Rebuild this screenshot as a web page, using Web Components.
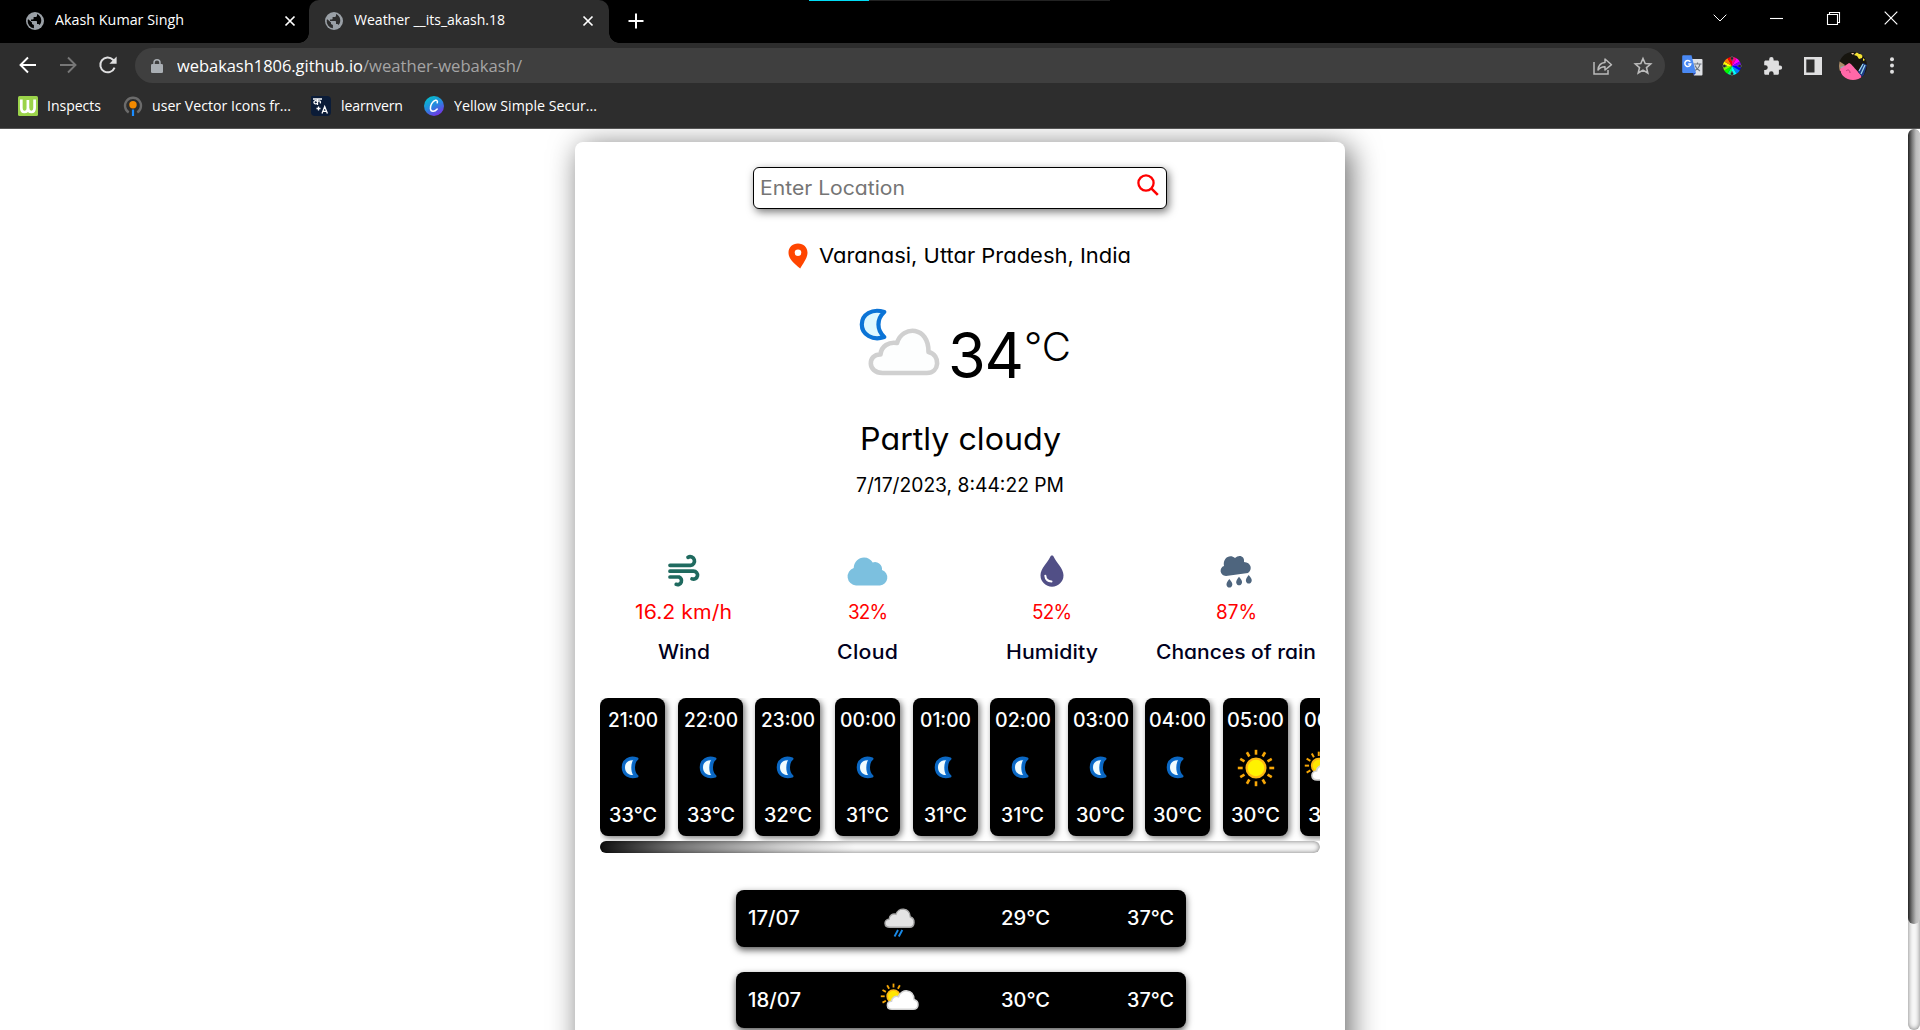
<!DOCTYPE html>
<html lang="en">
<head>
<meta charset="utf-8">
<title>Weather __its_akash.18</title>
<style>
html,body{margin:0;height:1030px;width:1920px;overflow:hidden;background:#fff}
</style>
</head>
<body>
<weather-window></weather-window>
<script>
const define = (name, render, after) => customElements.define(name, class extends HTMLElement {
  connectedCallback() {
    if (this.shadowRoot) return;
    const root = this.attachShadow({ mode: 'open' });
    root.innerHTML = render(this);
    if (after) after(this, root);
  }
});
const at = (el, n, d = '') => el.getAttribute(n) ?? d;

/* Single line of text, widened and tracked to a given advance width. */
define('fit-text', el => `<style>
:host{display:block;flex:none;white-space:nowrap;font-size:${at(el,'size',16)}px;line-height:${at(el,'line',24)}px;font-weight:${at(el,'weight',400)};width:${at(el,'w')}px}
span{display:inline-block;white-space:pre;transform-origin:0 50%}
</style><span>${at(el,'text')}</span>`, (el, root) => {
  const s = root.querySelector('span'), n = at(el,'text').length, w = +at(el,'w');
  const nat = s.getBoundingClientRect().width;
  if (!w || !nat || n < 2) return;
  const k = Math.max(.97, Math.min(1.09, w / nat));
  const ls = (w / k - nat) / (n - 1);
  s.style.letterSpacing = ls + 'px';
  s.style.marginRight = -ls + 'px';
  s.style.transform = `scaleX(${k})`;
});
const T = (text, w, size, line, weight = 400, extra = '') => `<fit-text text="${text}" w="${w}" size="${size}" line="${line}" weight="${weight}" ${extra}></fit-text>`;

const rays = (cx, cy, a, b, w, list) => list.map(d => { const r = d*Math.PI/180, c = Math.cos(r), s = Math.sin(r); return `<path d="M${cx+a*c} ${cy+a*s}L${cx+b*c} ${cy+b*s}" stroke="#f7a707" stroke-width="${w}"/>`; }).join('');
const globe = '<circle cx="9" cy="9" r="9" fill="#9aa0a6"/><path fill="var(--hole,#000)" d="M2.300 7.200 6 10.500v1.500l1.900 1v3.300A7.400 7.400 0 0 1 1.700 8ZM11 2.100v1.300c0 .9-.8 1.600-1.700 1.600H7.600v1.500c0 .6-.5.900-1 .9H5v1.500h5c.6 0 1 .4 1 1V12h.9c.8 0 1.400.5 1.600 1.100A6.900 6.900 0 0 0 11 2.100Z"/>';
const slice = (i) => { const a = i*30*Math.PI/180, b = (i+1)*30*Math.PI/180; return `<path fill="hsl(${(690 - i*30)%360} 100% 50%)" d="M10 10L${10+9*Math.sin(a)} ${10-9*Math.cos(a)}A9 9 0 0 1 ${10+9*Math.sin(b)} ${10-9*Math.cos(b)}Z"/>`; };
const S = 'fill="none" stroke="currentColor"';
const ICONS = {
  globe: [18,18,globe],
  x: [12,12,`<path d="M1.500 1.500l9 9M10.500 1.500l-9 9" ${S} stroke-width="1.700"/>`],
  plus: [16,16,`<path d="M8 .5v15M.5 8h15" ${S} stroke-width="2"/>`],
  chevron: [14,8,`<path d="M.7.700 7 7l6.300-6.300" ${S} stroke-width="1"/>`],
  min: [13,13,`<path d="M0 6.500h13" ${S} stroke-width="1.100"/>`],
  restore: [13,13,`<path d="M.5 2.500h10v10H.5ZM2.500 2.500v-2h10v10h-2" ${S} stroke-width="1.100"/>`],
  close: [14,14,`<path d="M.7.700l12.600 12.600M13.300.700.700 13.300" ${S} stroke-width="1.200"/>`],
  back: [18,18,`<path d="M17 9H2M9 1.500 1.500 9 9 16.500" ${S} stroke-width="1.900"/>`],
  fwd: [18,18,`<path d="M1 9h15M9 1.500 16.500 9 9 16.500" ${S} stroke-width="1.900"/>`],
  reload: [18,18,`<path d="M15.600 11.600A7.400 7.400 0 1 1 14 3.700l2 2" ${S} stroke-width="2"/><path d="M17.600.6v7.200h-7.200Z" fill="currentColor"/>`],
  lock: [12,14,`<rect y="5" width="12" height="9" rx="1.300" fill="currentColor"/><path d="M3 6V3.700a3 3 0 0 1 6 0V6" ${S} stroke-width="1.500"/>`],
  share: [20,18,`<path d="M1 5v12h14v-4" ${S} stroke-width="1.500"/><path d="M5 13c.4-5 3.200-7.400 7-7.600V2l6.500 5.700L12 13V9.700c-3-.1-5.200.9-7 3.300Z" ${S} stroke-width="1.500" stroke-linejoin="round"/>`],
  star: [18,17,`<path d="m9 1.500 2.200 5 5.500.5-4.200 3.600 1.300 5.400L9 13.100 4.200 16l1.300-5.400L1.300 7l5.500-.5Z" ${S} stroke-width="1.600"/>`],
  translate: [21,21,`<path d="M9 4h10.500a1 1 0 0 1 1 1v14.500a1 1 0 0 1-1 1H12Z" fill="#dfe1e5"/><path d="M11.500 9h8M15.500 7.500V9M18 9c-.6 3-2.500 5-5 6.500M13 10.500c1 2.500 3 4.500 5 5.500" fill="none" stroke="#6f7680" stroke-width="1.200"/><path d="M1.200.200h8.300L14 18H1.200a1 1 0 0 1-1-1V1.200a1 1 0 0 1 1-1Z" fill="#4a89f3"/><path d="m11 18 3 0-2.500 2.500Z" fill="#2a49b5"/><path d="M8.300 6.800A3 3 0 1 0 8.800 9H6.200" fill="none" stroke="#fff" stroke-width="1.500"/>`],
  wheel: [20,20,[...Array(12).keys()].map(i=>slice(i)).join('')+'<g fill="#222" stroke="#777" stroke-width=".5"><path d="M10 0l1.500 2.200L10 5 8.500 2.200ZM10 20l1.500-2.200L10 15l-1.500 2.800ZM0 10l2.200-1.500L5 10l-2.800 1.500ZM20 10l-2.200-1.500L15 10l2.800 1.500Z"/></g>'],
  puzzle: [18,18,'<path fill="#dfdfe0" d="M16 8.500h-1.100V5.200c0-.9-.7-1.600-1.600-1.600H9.600V2.300a2.200 2.200 0 0 0-4.400 0v1.300H1.800C.9 3.600.2 4.300.2 5.200v3h1.200a2.300 2.300 0 0 1 0 4.700H.2v3.300c0 .9.700 1.600 1.600 1.600H5v-1.200a2.300 2.300 0 0 1 4.600 0v1.200h3.700c.9 0 1.600-.7 1.600-1.600v-3.400H16a2.150 2.150 0 0 0 0-4.300Z"/>'],
  panel: [18,18,'<path fill="#dfdfe0" fill-rule="evenodd" d="M0 0h18v18H0ZM2.300 2.500v13h8.200v-13Z"/>'],
  avatar: [28,28,'<clipPath id="c"><circle cx="14" cy="14" r="14"/></clipPath><g clip-path="url(#c)"><path fill="#17150f" d="M0 0h28v28H0Z"/><path fill="#a98b6a" d="M0 9l6 4-3 6H0Z"/><path fill="#82b9c9" d="M1 15l5-1-2 3Z"/><path fill="#f5e334" d="m15 3 3-3 2 2 4 0-1 4-3 1-2-3ZM24 6l2 2-2 1Z"/><path fill="#f5c6a0" d="M12 1l3 0-1 2Z"/><path fill="#ff68a8" d="M1 17 10 11c3 1 5 5 12 12l1 5H4Z"/><path d="M7 19c2-2 4-1 4 2" stroke="#b73d76" fill="none"/><path fill="#1c3a83" d="m19 20 5-9 4 2-4 13Z"/><path d="m20 19 4-7M22 22l4-9" stroke="#9ad4e9" stroke-width="1.300"/></g>'],
  dots: [4,17,'<g fill="#dfdfe0"><circle cx="2" cy="2.200" r="2"/><circle cx="2" cy="8.500" r="2"/><circle cx="2" cy="14.800" r="2"/></g>'],
  bmW: [20,20,'<rect width="20" height="20" rx="1.500" fill="#9bd34a"/><path d="M3.300 3.500V12c0 2.800 1 4 3 4s3.600-1.300 3.600-4V4M10 12c0 2.800 1.400 4 3.400 4s3.200-1.300 3.200-4V3.500" fill="none" stroke="#fff" stroke-width="2.700"/>'],
  bmUser: [20,20,'<path d="M5.700 16.500a8 8 0 1 1 8.600 0" fill="none" stroke="#6b6b6b" stroke-width="2.400"/><circle cx="10" cy="8.700" r="3.700" fill="#f38a00"/><path d="M10 13.500V20" stroke="#1a8cff" stroke-width="2.200"/>'],
  bmLearn: [20,20,'<path d="M1 0h15a4 4 0 0 1 4 4v12a4 4 0 0 1-4 4H4a4 4 0 0 1-4-4V1a1 1 0 0 1 1-1Z" fill="#0b1c38"/><path d="M2 3h9M6.500 3v6M6 5.500a1.600 1.600 0 1 0-.2 1.800M6.500 5.300c3-1 3.500.5 2.500 2M7.500 10.500v4M5.500 12.500h4M11 17.500l2.700-7 2.700 7M12 15.300h3.500" fill="none" stroke="#fff" stroke-width="1.300"/>'],
  bmCanva: [20,20,'<linearGradient id="g" x1=".2" y1="0" x2=".75" y2="1"><stop offset="0" stop-color="#00c4cc"/><stop offset=".5" stop-color="#2787df"/><stop offset="1" stop-color="#7d2ae8"/></linearGradient><circle cx="10" cy="10" r="10" fill="url(#g)"/><path d="M13.200 6.800c.8-1.500-.3-2.800-1.700-2.500C8.500 5 6 9.500 6.400 12.700c.4 3.300 4 3.600 6.800.3" fill="none" stroke="#fff" stroke-width="1.500" stroke-linecap="round"/>'],
  search: [22,22,'<circle cx="9" cy="9" r="7.600" fill="none" stroke="#f00" stroke-width="2.300"/><path d="M14.300 14.300 20.800 20.800" stroke="#f00" stroke-width="2.600"/>'],
  pin: [20,26,'<path fill="#ff4500" fill-rule="evenodd" d="M10 .5C4.400.500.500 4.400.500 9.800c0 5.200 4.200 9.800 11.700 15.700C15 20.500 19.500 15 19.500 9.800 19.500 4.400 15.600.500 10 .500ZM10 6.500a3.300 3.300 0 1 1 0 6.600 3.300 3.300 0 0 1 0-6.600Z"/>'],
  night: [80,68,'<path d="M24.300 4C12 0 1.800 6.500 1.800 16.500S12.500 33 24.300 29C16.500 22 16.500 11 24.300 4Z" fill="#dff8ff" stroke="#0c74d6" stroke-width="4.200" stroke-linejoin="round"/><path d="M22.500 65C7 65 7.500 46 20.500 46.500c.8-8.500 8.500-13 16.500-11.500C42.500 17 69 18 68.500 44c12.500 3 11 21-1.500 21Z" fill="#fdfefe" stroke="#d0d0d0" stroke-width="4.600" stroke-linejoin="round"/>'],
  wind: [32,32,'<g fill="none" stroke="#1f6a5f" stroke-width="3.700" stroke-linecap="round"><path d="M2 10.300h20.500a4.300 4.300 0 1 0-2.500-8"/><path d="M2 16.200h23.500a4 4 0 1 1-1.500 7.700"/><path d="M2 22h9a3.900 3.900 0 1 1-2.800 7.300"/></g>'],
  cloud: [41,29,'<path fill="#7cc0df" d="M9 28.500A9 9 0 0 1 6.700 11C7 4.700 11.500.500 17 .500c4 0 7 2 8.700 5a7 7 0 0 1 9.300 7.500A8 8 0 0 1 33 28.500Z"/>'],
  drop: [24,32,'<path fill="#514f86" d="M12 .5c.9 0 1.300.4 1.700 1.200C16 7 23.500 13.500 23.500 20.200a11.500 11.500 0 0 1-23 0C.500 13.500 8 7 10.300 1.700 10.700.900 11.100.500 12 .500Z"/><path d="M5.300 20.700c.3 3.400 2.500 5.600 6.200 5.700" fill="none" stroke="#fff" stroke-width="2" stroke-linecap="round"/>'],
  rain: [32,33,'<g fill="#4e657e"><path d="M6 21C-.5 20.500-1 12.500 4 11 2.500 3.500 9.500-1.500 15 3c4-4 10-2 9 4 7 .3 9 7.500 4 11Z"/><path d="M9.300 24c2.600 3 3.300 4.500 3 6-.6 3.400-5.200 3.400-5.800 0-.2-1.600.8-3.500 2.800-6Z"/><path d="M19 21.700c2.600 3 3.300 4.500 3 6-.6 3.400-5.200 3.400-5.800 0-.2-1.600.8-3.500 2.800-6ZM28.700 20c2.600 3 3.300 4.500 3 6-.6 3.400-5.200 3.400-5.800 0-.2-1.600.8-3.500 2.800-6Z"/></g>'],
  moon: [19,25,'<path d="M16.200 3.800C8.500 1 2 5 2 12.200s6.500 11.500 14.200 9C11.500 17 11.500 7.500 16.200 3.800Z" fill="#0b6fd2" stroke="#0b67c2" stroke-width="2.600" stroke-linejoin="round"/><path d="M12 5.200C7 5 4 8 4 12.400s3.200 7.700 8 7.600C9.700 16 9.700 9 12 5.200Z" fill="#effcff"/>'],
  sun: [38,38,rays(19,19,13.300,18.200,2.600,[...Array(12).keys()].map(i=>i*30))+'<circle cx="19" cy="19" r="9.400" fill="#fff200" stroke="#fdb813" stroke-width="2.300"/>'],
  suncloud: [38,28,rays(12.500,13.300,8.800,12.700,1.800,[-210,-180,-150,-120,-90,-60])+'<circle cx="12.500" cy="13.300" r="6.300" fill="#ffe600" stroke="#fdb813" stroke-width="1.700"/><path d="M11 26.300C5 26.300 4.800 18.500 10.500 18.200c.2-3.600 4-5.800 7-4.500C20 5.500 33 5.500 33 16.500c5.500 1.500 5.500 9.800-1 9.800Z" fill="#fff" stroke="#d3d3d3" stroke-width="1.500"/>'],
  drizzle: [32,31,'<path d="M7 20.300C.5 20.300.5 12.500 6 12.300c.2-4 3.800-6 7-5C15 .2 26.500-.200 27.300 10c5.200 1.300 5 10.300-.8 10.300Z" fill="#e3e3e4" stroke="#a9a9a9" stroke-width="1.400"/><path d="m15 23-3.500 6.500M19.300 23l-3.500 6.500" stroke="#1989e6" stroke-width="1.900"/>']
};
define('ui-icon', el => { const [w,h,b] = ICONS[at(el,'name')]; const s = +at(el,'scale',1);
  return `<style>:host{display:block;flex:none;width:${w*s}px;height:${h*s}px}svg{display:block;overflow:visible}</style><svg width="${w*s}" height="${h*s}" viewBox="0 0 ${w} ${h}">${b}</svg>`; });
const I = (name, extra = '') => `<ui-icon name="${name}" ${extra}></ui-icon>`;

define('browser-tab', el => `<style>
:host{display:flex;align-items:center;box-sizing:border-box;height:43px;width:${at(el,'width')}px;padding:0 ${at(el,'pr')}px 1px ${at(el,'pl')}px;color:#fff}
:host([active]){background:#2d2d2d;border-radius:10px 10px 0 0;--hole:#2d2d2d;position:relative}
:host([active])::before,:host([active])::after{content:"";position:absolute;bottom:0;width:10px;height:10px}
:host([active])::before{left:-10px;background:radial-gradient(circle at 0 0,#0000 9.500px,#2d2d2d 10px)}
:host([active])::after{right:-10px;background:radial-gradient(circle at 100% 0,#0000 9.500px,#2d2d2d 10px)}
.t{margin-left:11px;margin-top:-2px;flex:1}
</style>${I('globe')}<div class="t">${T(at(el,'label'),at(el,'tw'),14.5,22)}</div>${I('x')}`);

define('book-mark', el => `<style>:host{display:flex;align-items:center;gap:${at(el,'gap',9)}px;color:#fff}</style>${I(at(el,'icon'))}${T(at(el,'label'),at(el,'tw'),14.5,22)}`);

define('browser-chrome', () => `<style>
:host{display:flex;flex-direction:column;height:129px;background:#2d2d2d;color:#fff;font-family:"Open Sans",sans-serif;border-bottom:1px solid #555;box-sizing:border-box}
.tabs{height:43px;background:#000;display:flex;align-items:center}
.win{margin-left:auto;display:flex;align-items:center;margin-right:22px;height:36px;align-self:flex-start;gap:43px}
.bar{height:45px;display:flex;align-items:center;padding-left:18px}
.bar>ui-icon{margin-bottom:1px}
.pill{margin-left:17.500px;width:1530px;height:35px;border-radius:18px;background:#3f3f3f;display:flex;align-items:center;box-sizing:border-box;padding:0 13px 0 16px}
.ext{display:flex;align-items:center;flex:1}
.marks{display:flex;align-items:center;height:36px;padding:0 0 0 18px}
.line{position:absolute;left:809px;top:0;width:301px;height:1px;background:linear-gradient(90deg,#00dcf5 60px,#222 60px)}
.u{color:#fff;margin-left:14px}.p{color:#a5a5a5}
</style>
<div class="tabs">
<browser-tab width="309" pl="26" pr="13" label="Akash Kumar Singh" tw="129"></browser-tab>
<browser-tab active width="300" pl="16" pr="15" label="Weather __its_akash.18" tw="151"></browser-tab>
${I('plus','style="margin:0 0 1px 19px"')}
<div class="win">${I('chevron')}${I('min')}${I('restore','style="margin-left:1px"')}${I('close','style="margin-left:1px"')}</div>
</div>
<div class="bar">${I('back','style="margin-left:1px"')}${I('fwd','style="margin-left:22px;color:#777"')}${I('reload','style="margin-left:22px;color:#dfdfe0"')}
<div class="pill">${I('lock','style="color:#aaafb4"')}<div class="u">${T('webakash1806.github.io',186,17,26)}</div><div class="p">${T('/weather-webakash/',159,17,26)}</div>
${I('share','style="margin-left:auto;color:#bbb"')}${I('star','style="margin-left:21px;color:#bbb"')}</div>
<div class="ext">${I('translate','style="margin-left:17px"')}${I('wheel','style="margin-left:19px"')}${I('puzzle','style="margin-left:22px"')}${I('panel','style="margin-left:22px"')}${I('avatar','style="margin-left:17px"')}${I('dots','style="margin-left:23px"')}</div></div>
<div class="marks">
<book-mark icon="bmW" label="Inspects" tw="54"></book-mark>
<book-mark icon="bmUser" label="user Vector Icons fr..." tw="139" style="margin-left:22px"></book-mark>
<book-mark icon="bmLearn" label="learnvern" gap="10" tw="62" style="margin-left:20px"></book-mark>
<book-mark icon="bmCanva" label="Yellow Simple Secur..." tw="143" gap="10" style="margin-left:21px"></book-mark>
</div><div class="line"></div>`);

define('search-box', () => `<style>
:host{display:flex;justify-content:space-between;box-sizing:border-box;width:414px;height:42px;border:1px solid #000;border-radius:6px;background:#fff;box-shadow:2px 3px 8px #0008;padding:0 7px 0 6px;color:#757575}
</style>${T('Enter Location',145,19.5,40)}${I('search','style="margin-top:6px"')}`);

define('stat-cell', el => `<style>
:host{display:flex;flex-direction:column;align-items:center;width:160px}
.i{height:42px;display:flex;align-items:center}.v{color:#f00;margin-top:6px}.l{color:#000020;margin-top:12px}
</style><div class="i">${I(at(el,'icon'))}</div><div class="v">${T(at(el,'value'),at(el,'vw'),19.5,28)}</div><div class="l">${T(at(el,'label'),at(el,'lw'),19.5,28,450)}</div>`);

define('hour-card', el => `<style>
:host{display:flex;flex:none;flex-direction:column;align-items:center;box-sizing:border-box;width:65px;height:138px;border-radius:8px;background:#000;color:#fff;box-shadow:2px 2px 6px #0008;padding-top:10px}
.i{height:50px;margin:11px 0 10px;display:flex;align-items:center}
</style>${T(at(el,'time'),at(el,'w'),19.5,24,550)}<div class="i">${I(at(el,'icon'), at(el,'icon')=='suncloud'?'style="margin:-4px 0 0 -14px" scale="1.1"':at(el,'icon')=='moon'?'style="margin:0 4px 1px 0"':'')}</div>${T(at(el,'temp'),at(el,'tw'),19.5,24,550)}`);

define('hourly-strip', () => { const d = [
 ['21:00',50,'moon','33°C',48,0],['22:00',54,'moon','33°C',48,13],['23:00',54,'moon','32°C',48,12],['00:00',56,'moon','31°C',43,15],['01:00',51,'moon','31°C',43,13],['02:00',56,'moon','31°C',43,12],['03:00',56,'moon','30°C',49,13],['04:00',57,'moon','30°C',49,12],['05:00',57,'sun','30°C',49,13],['06:00',57,'suncloud','31°C',49,12]];
 return `<style>:host{display:block;width:720px;height:155px}
.s{display:flex;height:143px;overflow:hidden}
.b{height:12px;border-radius:6px;background:linear-gradient(90deg,#111,#777 80px,#ccc 180px,#f7f7f7 255px,#f7f7f700 256px),#f7f7f7;box-shadow:inset 0 0 5px #0008}</style>
<div class="s">${d.map(h=>`<hour-card time="${h[0]}" w="${h[1]}" icon="${h[2]}" temp="${h[3]}" tw="${h[4]}" style="margin-left:${h[5]}px"></hour-card>`).join('')}</div><div class="b"></div>`; });

define('day-row', el => `<style>
:host{display:grid;grid-template-columns:136px 117px 126px 1fr;align-items:start;box-sizing:border-box;width:450px;height:${at(el,'h')}px;border-radius:8px;background:#000;color:#fff;box-shadow:0 3px 7px #000a;padding:15px 12px 0 12px}
.r{justify-self:end}
</style>${T(at(el,'date'),at(el,'dw'),19.5,27,450)}${I(at(el,'icon'),`style="margin:${at(el,'im')}"`)}${T(at(el,'low'),49,19.5,27,450)}${T(at(el,'high'),47,19.5,27,450,'class="r"')}`);

define('weather-card', () => `<style>
:host{display:flex;flex-direction:column;align-items:center;width:770px;height:1100px;background:#fff;border-radius:8px;box-shadow:5px 5px 30px #0009;font-family:Inter,sans-serif;font-feature-settings:"cv11";color:#000}
search-box{margin-top:25px}
.loc{display:flex;align-items:center;gap:11px;height:31px;margin-top:31px;margin-right:2px}
.now{display:flex;align-items:flex-start;height:90px;margin-top:29px;padding-left:9px}
.stats{display:flex;justify-content:space-between;width:713px;margin-top:52px;height:116px}
hourly-strip{margin-top:32px}
.days{display:flex;flex-direction:column;gap:25px;margin:37px 0 0 2px}
</style>
<search-box></search-box>
<div class="loc">${I('pin')}${T('Varanasi, Uttar Pradesh, India',312,20.5,31)}</div>
<div class="now">${I('night','style="margin:8px -2px 0 2px"')}${T('34',76,63,62,400,'style="margin:24px 0 0 10px"')}${T('°C',47,39,40,300,'style="margin-top:27px"')}</div>
${T('Partly cloudy',201,31,40,400,'style="margin-top:29px"')}
${T('7/17/2023, 8:44:22 PM',208,19.5,26,400,'style="margin-top:13px"')}
<div class="stats">
<stat-cell icon="wind" value="16.2 km/h" vw="97" label="Wind" lw="52"></stat-cell>
<stat-cell icon="cloud" value="32%" vw="40" label="Cloud" lw="61"></stat-cell>
<stat-cell icon="drop" value="52%" vw="40" label="Humidity" lw="92"></stat-cell>
<stat-cell icon="rain" value="87%" vw="41" label="Chances of rain" lw="160"></stat-cell>
</div>
<hourly-strip></hourly-strip>
<div class="days">
<day-row h="57" date="17/07" dw="52" icon="drizzle" im="2px 0 0 -1px" low="29°C" high="37°C"></day-row>
<day-row h="56" date="18/07" dw="53" icon="suncloud" im="-4px 0 0 -3px" low="30°C" high="37°C"></day-row>
</div>`);

define('page-scrollbar', () => `<style>
:host{display:block;height:901px;border-radius:6px;background:#f7f7f7;box-shadow:inset 0 0 5px #0008;overflow:hidden}
div{height:795px;border-radius:6px;background:linear-gradient(90deg,#222,#777 4px,#bbb 8px,#ccc)}
</style><div></div>`);

define('weather-window', () => `<style>
:host{display:block;width:1920px;height:1030px;overflow:hidden}
main{display:grid;grid-template-columns:12px 1fr 12px;height:901px;overflow:hidden}
.m{display:flex;justify-content:center;align-items:flex-start;padding-top:13px;min-height:0}
</style><browser-chrome></browser-chrome><main><div></div><div class="m"><weather-card></weather-card></div><page-scrollbar></page-scrollbar></main>`);
</script>
</body>
</html>
